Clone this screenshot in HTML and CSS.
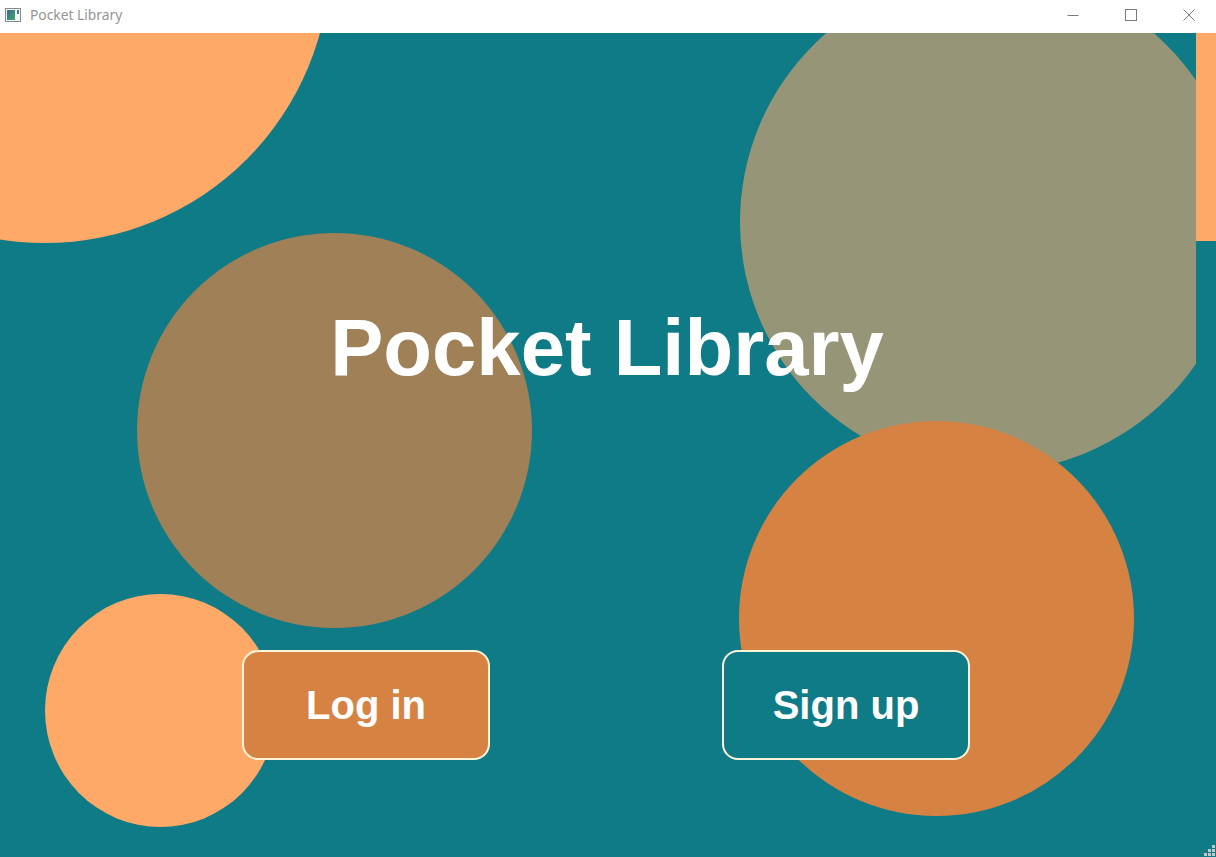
FILE: index.html
```html
<!DOCTYPE html>
<html lang="en">
<head>
<meta charset="utf-8">
<title>Pocket Library</title>
<link rel="stylesheet" href="styles.css">
</head>
<body>
<div class="window">
  <header class="titlebar">
    <div class="title-left">
      <svg class="app-icon" width="16" height="16" viewBox="0 0 16 16">
        <defs>
          <linearGradient id="g" x1="0" y1="0" x2="1" y2="1">
            <stop offset="0" stop-color="#2e6f8f"/>
            <stop offset="1" stop-color="#4aa36a"/>
          </linearGradient>
        </defs>
        <rect x="0.5" y="1.5" width="15" height="13" fill="#f4f4f4" stroke="#8a8a8a"/>
        <rect x="2" y="3" width="8" height="10" fill="url(#g)"/>
        <rect x="12" y="3" width="2" height="4" fill="#3b7f7f"/>
      </svg>
      <span class="title-text">Pocket Library</span>
    </div>
    <div class="controls">
      <span class="ctl">
        <svg width="12" height="12" viewBox="0 0 12 12"><path d="M0.5 6.5H11.5" stroke="#7a7a7a" stroke-width="1"/></svg>
      </span>
      <span class="ctl">
        <svg width="12" height="12" viewBox="0 0 12 12"><rect x="0.5" y="0.5" width="11" height="11" fill="none" stroke="#7a7a7a" stroke-width="1"/></svg>
      </span>
      <span class="ctl">
        <svg width="12" height="12" viewBox="0 0 12 12"><path d="M0.5 0.5L11.5 11.5M11.5 0.5L0.5 11.5" stroke="#7a7a7a" stroke-width="1"/></svg>
      </span>
    </div>
  </header>
  <div class="client">
    <main class="canvas">
      <div class="circle c-topleft"></div>
      <div class="circle c-brown"></div>
      <div class="circle c-khaki"></div>
      <div class="circle c-orange"></div>
      <div class="circle c-small"></div>
      <div class="content">
        <h1 class="app-title">Pocket Library</h1>
        <div class="actions">
          <button class="btn btn-login">Log in</button>
          <button class="btn btn-signup">Sign up</button>
        </div>
      </div>
    </main>
    <aside class="strip">
      <div class="strip-top"></div>
    </aside>
    <div class="grip">
      <span class="dot d1"></span>
      <span class="dot d2"></span>
      <span class="dot d3"></span>
      <span class="dot d4"></span>
      <span class="dot d5"></span>
      <span class="dot d6"></span>
    </div>
  </div>
</div>
</body>
</html>
```

FILE: styles.css
```css
html, body {
  margin: 0;
  padding: 0;
  width: 1216px;
  height: 857px;
  overflow: hidden;
  background: #ffffff;
}

.window {
  width: 1216px;
  height: 857px;
  display: flex;
  flex-direction: column;
}

.titlebar {
  height: 33px;
  flex: 0 0 33px;
  background: #ffffff;
  display: flex;
  align-items: flex-start;
  justify-content: space-between;
}

.title-left {
  display: flex;
  align-items: center;
  padding: 6px 0 0 5px;
  gap: 9px;
}

.app-icon {
  display: block;
}

.title-text {
  font-family: "Noto Sans", "Open Sans", sans-serif;
  font-size: 13.8px;
  color: #959595;
  line-height: 17px;
}

.controls {
  display: flex;
  margin-right: -2px;
}

.ctl {
  width: 58px;
  height: 29px;
  display: flex;
  align-items: center;
  justify-content: center;
}

.ctl svg {
  display: block;
  margin-top: 1px;
}

.client {
  flex: 1;
  display: flex;
  position: relative;
  background: #0f7b87;
}

.canvas {
  width: 1196px;
  height: 824px;
  position: relative;
  overflow: hidden;
  background: #0f7b87;
}

.circle {
  position: absolute;
  border-radius: 50%;
}

.c-topleft {
  left: -240px;
  top: -360px;
  width: 570px;
  height: 570px;
  background: #ffa968;
}

.c-brown {
  left: 137px;
  top: 200px;
  width: 395px;
  height: 395px;
  background: #a08056;
}

.c-khaki {
  left: 740px;
  top: -61px;
  width: 500px;
  height: 500px;
  background: #979577;
}

.c-orange {
  left: 739px;
  top: 388px;
  width: 395px;
  height: 395px;
  background: #d58242;
}

.c-small {
  left: 45px;
  top: 561px;
  width: 231px;
  height: 233px;
  background: #ffa968;
}

.content {
  position: relative;
  display: flex;
  flex-direction: column;
  align-items: center;
  width: 1216px;
}

.app-title {
  margin: 275px 0 0 -2px;
  font-family: "Liberation Sans", Arial, sans-serif;
  font-weight: bold;
  font-size: 79.7px;
  line-height: 80px;
  color: #ffffff;
  white-space: nowrap;
}

.actions {
  margin-top: 262px;
  display: flex;
  gap: 232px;
  align-self: flex-start;
  padding-left: 242px;
}

.btn {
  width: 248px;
  height: 110px;
  box-sizing: border-box;
  border: 2px solid #fff4d8;
  border-radius: 16px;
  font-family: "Liberation Sans", Arial, sans-serif;
  font-weight: bold;
  font-size: 40px;
  color: #ffffff;
  display: flex;
  align-items: center;
  justify-content: center;
  padding: 0;
  cursor: pointer;
}

.btn-login {
  background: #d58242;
}

.btn-signup {
  background: #0f7b87;
}

.strip {
  width: 20px;
  height: 824px;
  background: #0f7b87;
}

.strip-top {
  height: 208px;
  background: #ffa968;
}

.grip {
  position: absolute;
  right: 1px;
  bottom: 1px;
  display: grid;
  grid-template-columns: repeat(3, 3px);
  grid-template-rows: repeat(3, 3px);
  gap: 1px;
}

.dot {
  background: #c6c6c6;
}

.d1 { grid-column: 3; grid-row: 1; }
.d2 { grid-column: 2; grid-row: 2; }
.d3 { grid-column: 3; grid-row: 2; }
.d4 { grid-column: 1; grid-row: 3; }
.d5 { grid-column: 2; grid-row: 3; }
.d6 { grid-column: 3; grid-row: 3; }
```
